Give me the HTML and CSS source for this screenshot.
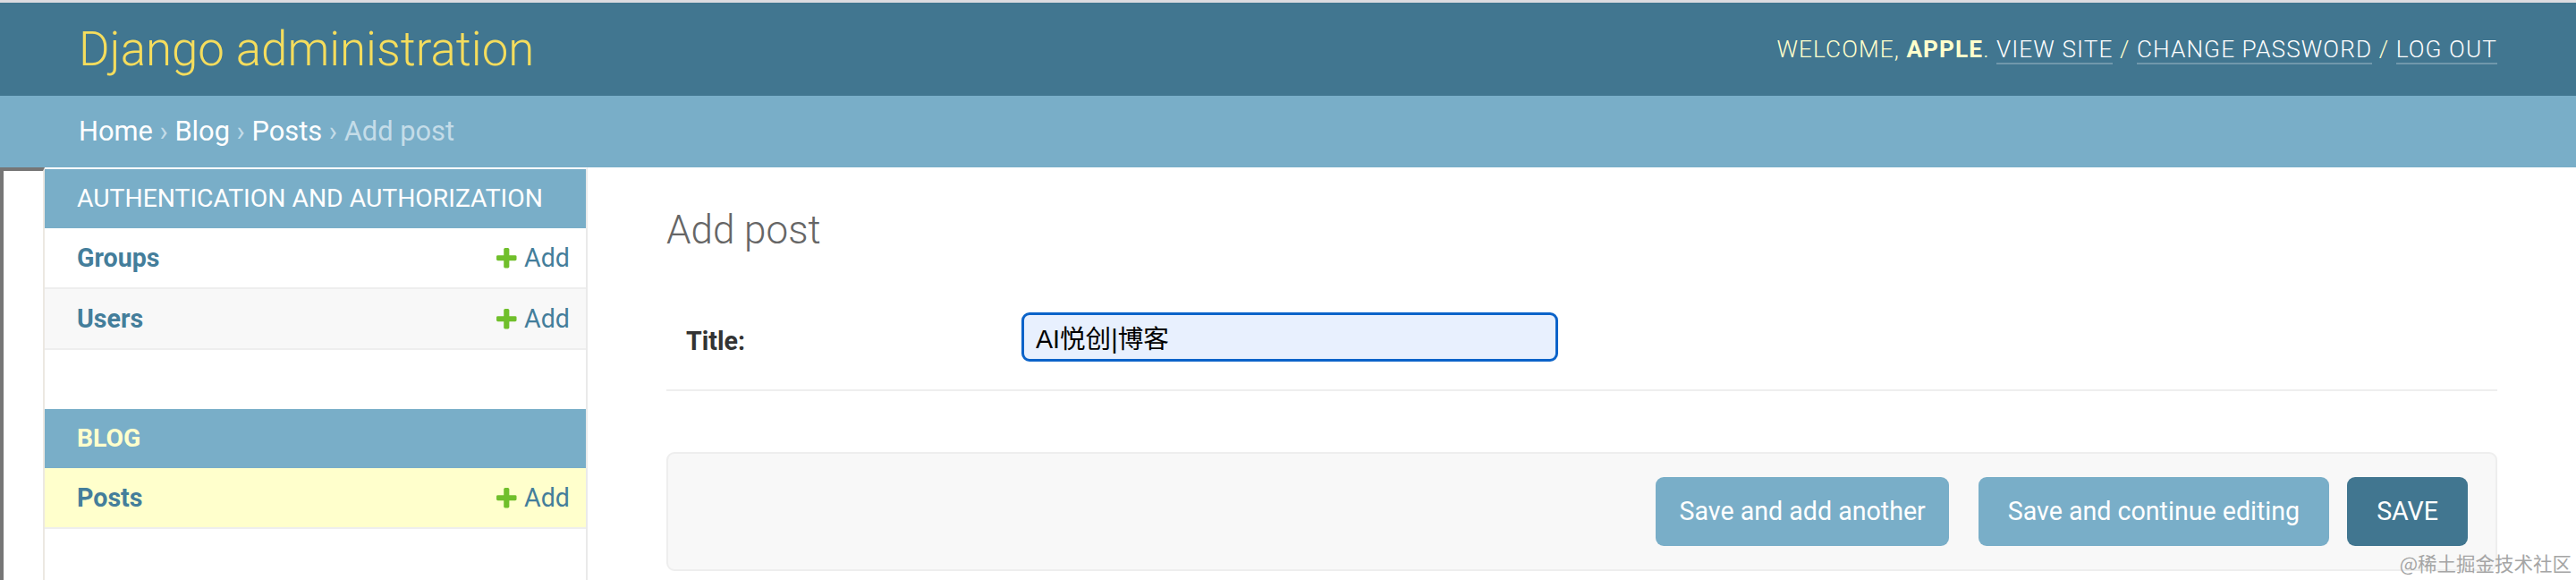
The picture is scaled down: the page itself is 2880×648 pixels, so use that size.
FILE: index.html
```html
<!DOCTYPE html>
<html lang="en">
<head>
<meta charset="utf-8">
<title>Add post | Django site admin</title>
<link rel="stylesheet" href="styles.css">
</head>
<body>
<div class="container">
  <header class="header">
    <div class="branding"><h1 class="site-name"><a href="#">Django administration</a></h1></div>
    <div class="user-tools">Welcome, <strong>apple</strong>. <a href="#">View site</a> / <a href="#">Change password</a> / <a href="#">Log out</a></div>
  </header>
  <nav class="breadcrumbs"><a href="#">Home</a> › <a href="#">Blog</a> › <a href="#">Posts</a> › Add post</nav>
  <div class="main">
    <button class="toggle-nav" aria-label="Toggle navigation"></button>
    <nav class="sidebar">
      <div class="module">
        <div class="caption">Authentication and Authorization</div>
        <div class="row"><a class="model" href="#">Groups</a><a class="addlink" href="#"><svg class="plus" viewBox="0 0 1792 1792"><path fill="#70bf2b" d="M1600 796v192q0 40-28 68t-68 28h-416v416q0 40-28 68t-68 28h-192q-40 0-68-28t-28-68v-416h-416q-40 0-68-28t-28-68v-192q0-40 28-68t68-28h416v-416q0-40 28-68t68-28h192q40 0 68 28t28 68v416h416q40 0 68 28t28 68z"/></svg>Add</a></div>
        <div class="row even"><a class="model" href="#">Users</a><a class="addlink" href="#"><svg class="plus" viewBox="0 0 1792 1792"><path fill="#70bf2b" d="M1600 796v192q0 40-28 68t-68 28h-416v416q0 40-28 68t-68 28h-192q-40 0-68-28t-28-68v-416h-416q-40 0-68-28t-28-68v-192q0-40 28-68t68-28h416v-416q0-40 28-68t68-28h192q40 0 68 28t28 68v416h416q40 0 68 28t28 68z"/></svg>Add</a></div>
      </div>
      <div class="module">
        <div class="caption current-app">Blog</div>
        <div class="row current"><a class="model" href="#">Posts</a><a class="addlink" href="#"><svg class="plus" viewBox="0 0 1792 1792"><path fill="#70bf2b" d="M1600 796v192q0 40-28 68t-68 28h-416v416q0 40-28 68t-68 28h-192q-40 0-68-28t-28-68v-416h-416q-40 0-68-28t-28-68v-192q0-40 28-68t68-28h416v-416q0-40 28-68t68-28h192q40 0 68 28t28 68v416h416q40 0 68 28t28 68z"/></svg>Add</a></div>
      </div>
    </nav>
    <div class="content">
      <h1 class="page-title">Add post</h1>
      <form class="form">
        <div class="form-row">
          <label class="field-label" for="id_title">Title:</label>
          <input class="text-field" type="text" id="id_title" value="AI悦创|博客">
        </div>
        <div class="submit-row">
          <button type="button" class="btn btn-another">Save and add another</button>
          <button type="button" class="btn btn-continue">Save and continue editing</button>
          <button type="button" class="btn btn-default">SAVE</button>
        </div>
      </form>
    </div>
  </div>
</div>
<div class="watermark">@稀土掘金技术社区</div>
</body>
</html>
```
FILE: styles.css
```css
* { box-sizing: border-box; }
html, body { margin: 0; padding: 0; }
body {
  width: 2880px;
  height: 648px;
  overflow: hidden;
  position: relative;
  background: #fff;
  color: #333;
  font-family: Roboto, "Liberation Sans", "Noto Sans CJK SC", sans-serif;
}
a { text-decoration: none; }

.header {
  display: flex;
  justify-content: space-between;
  align-items: center;
  padding: 22px 88px;
  background: #417690;
  border-top: 3px solid #dcdce0;
  color: #ffc;
}
.site-name {
  margin: 0;
  font-weight: 300;
  font-size: 52.8px;
  line-height: 60px;
}
.site-name a { color: #f5dd5d; }
.user-tools {
  font-weight: 300;
  font-size: 26.2px;
  letter-spacing: 1.1px;
  text-transform: uppercase;
  line-height: 34px;
  color: #ffc;
}
.user-tools strong { font-weight: 700; }
.user-tools a {
  color: #fff;
  border-bottom: 2px solid rgba(255, 255, 255, 0.25);
}

.breadcrumbs {
  background: #79aec8;
  padding: 22px 88px;
  font-size: 30.8px;
  line-height: 36px;
  color: #c4dce8;
}
.breadcrumbs a { color: #fff; }

.main {
  display: flex;
  height: 461px;
}
.toggle-nav {
  flex: 0 0 50px;
  padding: 0;
  margin: 0;
  background: #fff;
  border: 0;
  border-left: 4px solid #767676;
  border-top: 4px solid #767676;
  border-right: 2px solid #ece8e2;
}
.sidebar {
  flex: 0 0 607px;
  border-top: 2px solid transparent;
  border-right: 2px solid #eaeaea;
}
.module { margin-bottom: 66px; }
.caption {
  background: #79aec8;
  color: #fff;
  font-size: 28.3px;
  line-height: 30px;
  padding: 18px 20px 18px 36px;
  text-transform: uppercase;
  font-weight: 400;
}
.caption.current-app { color: #ffc; font-weight: 700; }
.row {
  display: flex;
  justify-content: space-between;
  align-items: center;
  padding: 16px 18px 16px 36px;
  line-height: 34px;
  font-size: 28.6px;
  border-bottom: 2px solid #eee;
  background: #fff;
}
.row.even { background: #f8f8f8; }
.row.current { background: #ffc; }
.model { color: #447e9b; font-weight: 700; }
.addlink {
  display: flex;
  align-items: center;
  color: #447e9b;
  font-weight: 400;
}
.plus { width: 28.6px; height: 28.6px; margin-right: 6px; }

.content {
  flex: 1;
  padding: 44px 88px;
}
.page-title {
  margin: 0 0 44px;
  font-weight: 300;
  font-size: 44px;
  line-height: 52px;
  color: #666;
}
.form-row {
  display: flex;
  align-items: center;
  padding: 22px 22px 31px;
  border-bottom: 2px solid #eee;
}
.field-label {
  flex: 0 0 375px;
  font-weight: 700;
  font-size: 28.6px;
  color: #333;
  padding-top: 8px;
}
.text-field {
  width: 600px;
  height: 55px;
  margin: 0;
  padding: 0 13px;
  border: 3px solid #0b63c9;
  border-radius: 9px;
  background: #e8f0fe;
  color: #000;
  font-family: "Liberation Sans", "Noto Sans CJK SC", sans-serif;
  font-size: 28.6px;
  outline: none;
}
.submit-row {
  display: flex;
  justify-content: flex-end;
  margin-top: 68px;
  padding: 26px 31px;
  background: #f8f8f8;
  border: 2px solid #eee;
  border-radius: 9px;
}
.btn {
  height: 77px;
  padding: 0 33px;
  margin: 0;
  border: none;
  border-radius: 9px;
  background: #79aec8;
  color: #fff;
  font-family: Roboto, "Liberation Sans", sans-serif;
  font-size: 28.6px;
  font-weight: 400;
  line-height: 77px;
}
.btn-another { padding: 0 26px; }
.btn-continue { margin-left: 33px; }
.btn-default { margin-left: 20px; background: #417690; }

.watermark {
  position: absolute;
  right: 5px;
  bottom: 7px;
  font-family: "Noto Sans CJK SC", sans-serif;
  font-size: 21.5px;
  line-height: 24px;
  color: #a5a5a5;
}
```
